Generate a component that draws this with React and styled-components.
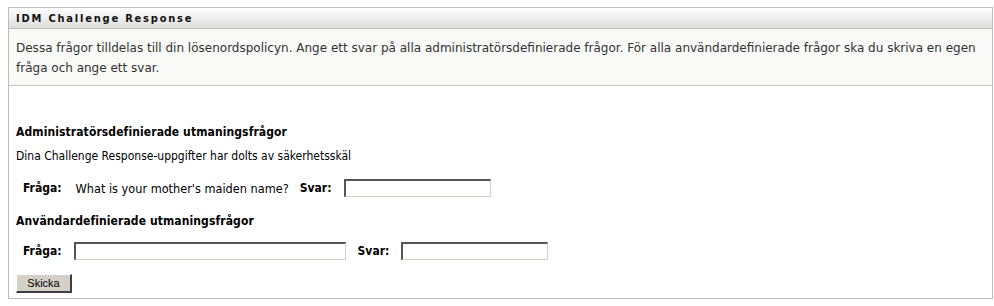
import styled, { createGlobalStyle } from 'styled-components';

const GlobalStyle = createGlobalStyle`
  body {
    margin: 0;
    background: #ffffff;
    font-family: "DejaVu Sans Condensed", "DejaVu Sans", sans-serif;
    font-size: 12px;
    color: #000000;
  }
`;

const Page = styled.div`
  padding: 7px 1px 8px 8px;
`;

const Panel = styled.div`
  border: 1px solid #bdbdbd;
  background: #ffffff;
`;

const PanelHeader = styled.div`
  height: 20px;
  display: flex;
  align-items: center;
  padding-left: 7px;
  background: linear-gradient(#ffffff, #dcdedc);
  border-bottom: 1px solid #bdbdbd;
  font-size: 11px;
  font-weight: bold;
  letter-spacing: 1.8px;
  color: #111111;
`;

const Intro = styled.div`
  background: #f9f9f7;
  border-bottom: 1px solid #c4c4c4;
  padding: 9px 7px 7px 7px;
  line-height: 20px;
  font-family: "DejaVu Sans", sans-serif;
  font-size: 12px;
  color: #333333;
`;

const Body = styled.div`
  padding: 36px 7px 5px 7px;
`;

const SectionTitle = styled.div`
  font-weight: bold;
  font-size: 12px;
  letter-spacing: 0.1px;
  line-height: 20px;
  margin-top: ${(p) => p.$top || 0}px;
  margin-bottom: ${(p) => p.$bottom || 4}px;
`;

const Note = styled.div`
  line-height: 20px;
`;

const Row = styled.div`
  display: flex;
  align-items: center;
  padding: ${(p) => p.$top ?? 10}px 0 0 7px;
  height: 24px;
`;

const Label = styled.span`
  font-weight: bold;
  margin-right: ${(p) => p.$gap || 12}px;
`;

const Question = styled.span`
  font-size: 12.6px;
  margin-right: 11px;
`;

const Field = styled.input`
  width: ${(p) => p.$w}px;
  height: 18px;
  box-sizing: border-box;
  border-style: solid;
  border-width: 2px 1px 1px 2px;
  border-color: #555555 #d4d0c8 #d4d0c8 #555555;
  padding: 0 2px;
  margin-right: ${(p) => p.$mr || 0}px;
  font: inherit;
`;

const Button = styled.button`
  margin-top: 11px;
  width: 56px;
  height: 19px;
  background: #d4d0c8;
  border-style: solid;
  border-width: 1px 2px 2px 1px;
  border-color: #ffffff #404040 #404040 #ffffff;
  font-family: "Liberation Sans", sans-serif;
  font-size: 11px;
  padding: 0;
  color: #000000;
`;

export default function App() {
  return (
    <Page>
      <GlobalStyle />
      <Panel>
        <PanelHeader>IDM Challenge Response</PanelHeader>
        <Intro>
          Dessa frågor tilldelas till din lösenordspolicyn. Ange ett svar på alla administratörsdefinierade
          frågor. För alla användardefinierade frågor ska du skriva en egen fråga och ange ett svar.
        </Intro>
        <Body>
          <SectionTitle>Administratörsdefinierade utmaningsfrågor</SectionTitle>
          <Note>Dina Challenge Response-uppgifter har dolts av säkerhetsskäl</Note>
          <Row>
            <Label $gap={14}>Fråga:</Label>
            <Question>What is your mother's maiden name?</Question>
            <Label $gap={13}>Svar:</Label>
            <Field $w={147} />
          </Row>
          <SectionTitle $top={11} $bottom={0}>Användardefinierade utmaningsfrågor</SectionTitle>
          <Row $top={4}>
            <Label>Fråga:</Label>
            <Field $w={272} $mr={12} />
            <Label>Svar:</Label>
            <Field $w={147} />
          </Row>
          <Button type="button">Skicka</Button>
        </Body>
      </Panel>
    </Page>
  );
}
